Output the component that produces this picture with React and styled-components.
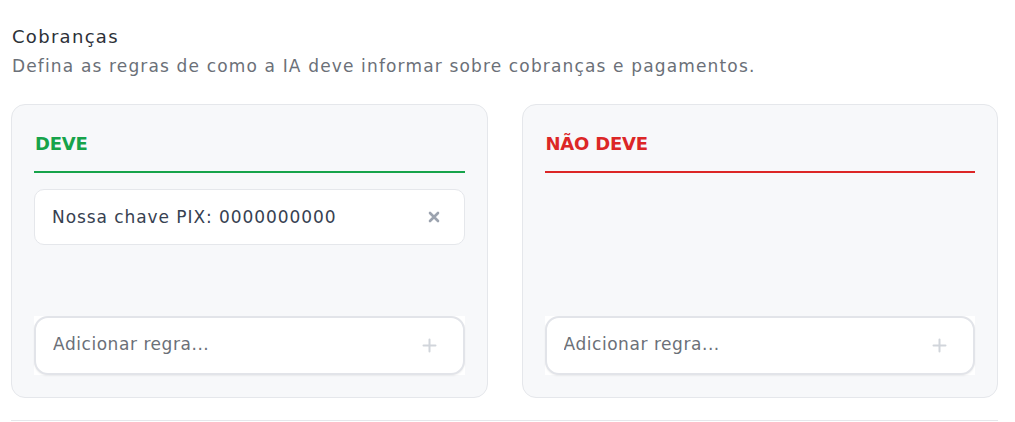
import React from "react";
import styled, { createGlobalStyle } from "styled-components";

const Global = createGlobalStyle`
  html, body { margin: 0; padding: 0; background: #ffffff; }
  body { font-family: "DejaVu Sans", "Noto Sans", sans-serif; }
  * { box-sizing: border-box; }
`;

const Page = styled.div`
  padding: 24px 17px 0 11px;
`;

const Title = styled.h2`
  margin: 0 0 0 1px;
  font-size: 18px;
  line-height: 26px;
  font-weight: 400;
  letter-spacing: 1.3px;
  color: #2d3138;
`;

const Subtitle = styled.p`
  margin: 4px 0 0 1px;
  font-size: 17px;
  line-height: 24px;
  color: #6b7078;
  letter-spacing: 1.15px;
`;

const Grid = styled.div`
  margin-top: 26px;
  display: grid;
  grid-template-columns: 1fr 1fr;
  gap: 34px;
  padding-bottom: 22px;
  border-bottom: 1px solid #e5e7eb;
`;

const Card = styled.section`
  height: 294px;
  background: #f7f8fa;
  border: 1px solid #e5e7eb;
  border-radius: 14px;
  padding: 27px 22px 22px 22px;
  display: flex;
  flex-direction: column;
`;

const Heading = styled.h3`
  margin: 0;
  padding: 0 0 15px 1px;
  font-size: 18px;
  line-height: 24px;
  font-weight: 700;
  letter-spacing: -0.2px;
  color: ${(p) => p.$color};
  border-bottom: 2px solid ${(p) => p.$color};
`;

const List = styled.div`
  flex: 1;
  padding-top: 16px;
  display: flex;
  flex-direction: column;
  gap: 10px;
`;

const Rule = styled.div`
  height: 56px;
  background: #ffffff;
  border: 1px solid #e5e7eb;
  border-radius: 10px;
  padding: 0 22px 0 17px;
  display: flex;
  align-items: center;
  justify-content: space-between;
  font-size: 17px;
  letter-spacing: 0.93px;
  color: #374151;
`;

const RemoveButton = styled.button`
  border: 0;
  background: none;
  padding: 0;
  width: 16px;
  height: 16px;
  display: flex;
  align-items: center;
  justify-content: center;
  color: #9ca3af;
  cursor: pointer;
`;

const InputWrap = styled.div`
  background: #ffffff;
`;

const InputBox = styled.div`
  height: 59px;
  border: 2px solid #e2e4e9;
  border-radius: 14px;
  box-shadow: 0 1px 2px rgba(0, 0, 0, 0.06);
  background: #ffffff;
  display: flex;
  align-items: center;
  padding: 0 26px 0 17px;
`;

const Input = styled.input`
  flex: 1;
  border: 0;
  outline: none;
  background: transparent;
  font-family: inherit;
  font-size: 17px;
  letter-spacing: 0.55px;
  color: #374151;
  padding: 0 0 4px 0;
  &::placeholder { color: #6b7078; }
`;

const AddButton = styled.button`
  border: 0;
  background: none;
  padding: 0;
  color: #d1d5db;
  display: flex;
  align-items: center;
  cursor: pointer;
`;

const XIcon = () => (
  <svg width="12" height="12" viewBox="0 0 12 12">
    <path d="M2 2 L10 10 M10 2 L2 10" stroke="currentColor" strokeWidth="2.6" strokeLinecap="round" />
  </svg>
);

const PlusIcon = () => (
  <svg width="15" height="15" viewBox="0 0 15 15">
    <path d="M7.5 1.5 V13.5 M1.5 7.5 H13.5" stroke="currentColor" strokeWidth="2" strokeLinecap="round" />
  </svg>
);

function Column({ title, color, rules }) {
  return (
    <Card>
      <Heading $color={color}>{title}</Heading>
      <List>
        {rules.map((r) => (
          <Rule key={r}>
            <span>{r}</span>
            <RemoveButton aria-label="Remover"><XIcon /></RemoveButton>
          </Rule>
        ))}
      </List>
      <InputWrap>
        <InputBox>
          <Input placeholder="Adicionar regra..." />
          <AddButton aria-label="Adicionar"><PlusIcon /></AddButton>
        </InputBox>
      </InputWrap>
    </Card>
  );
}

export default function App() {
  return (
    <>
      <Global />
      <Page>
        <Title>Cobranças</Title>
        <Subtitle>Defina as regras de como a IA deve informar sobre cobranças e pagamentos.</Subtitle>
        <Grid>
          <Column title="DEVE" color="#16a34a" rules={["Nossa chave PIX: 0000000000"]} />
          <Column title="NÃO DEVE" color="#dc2626" rules={[]} />
        </Grid>
      </Page>
    </>
  );
}
